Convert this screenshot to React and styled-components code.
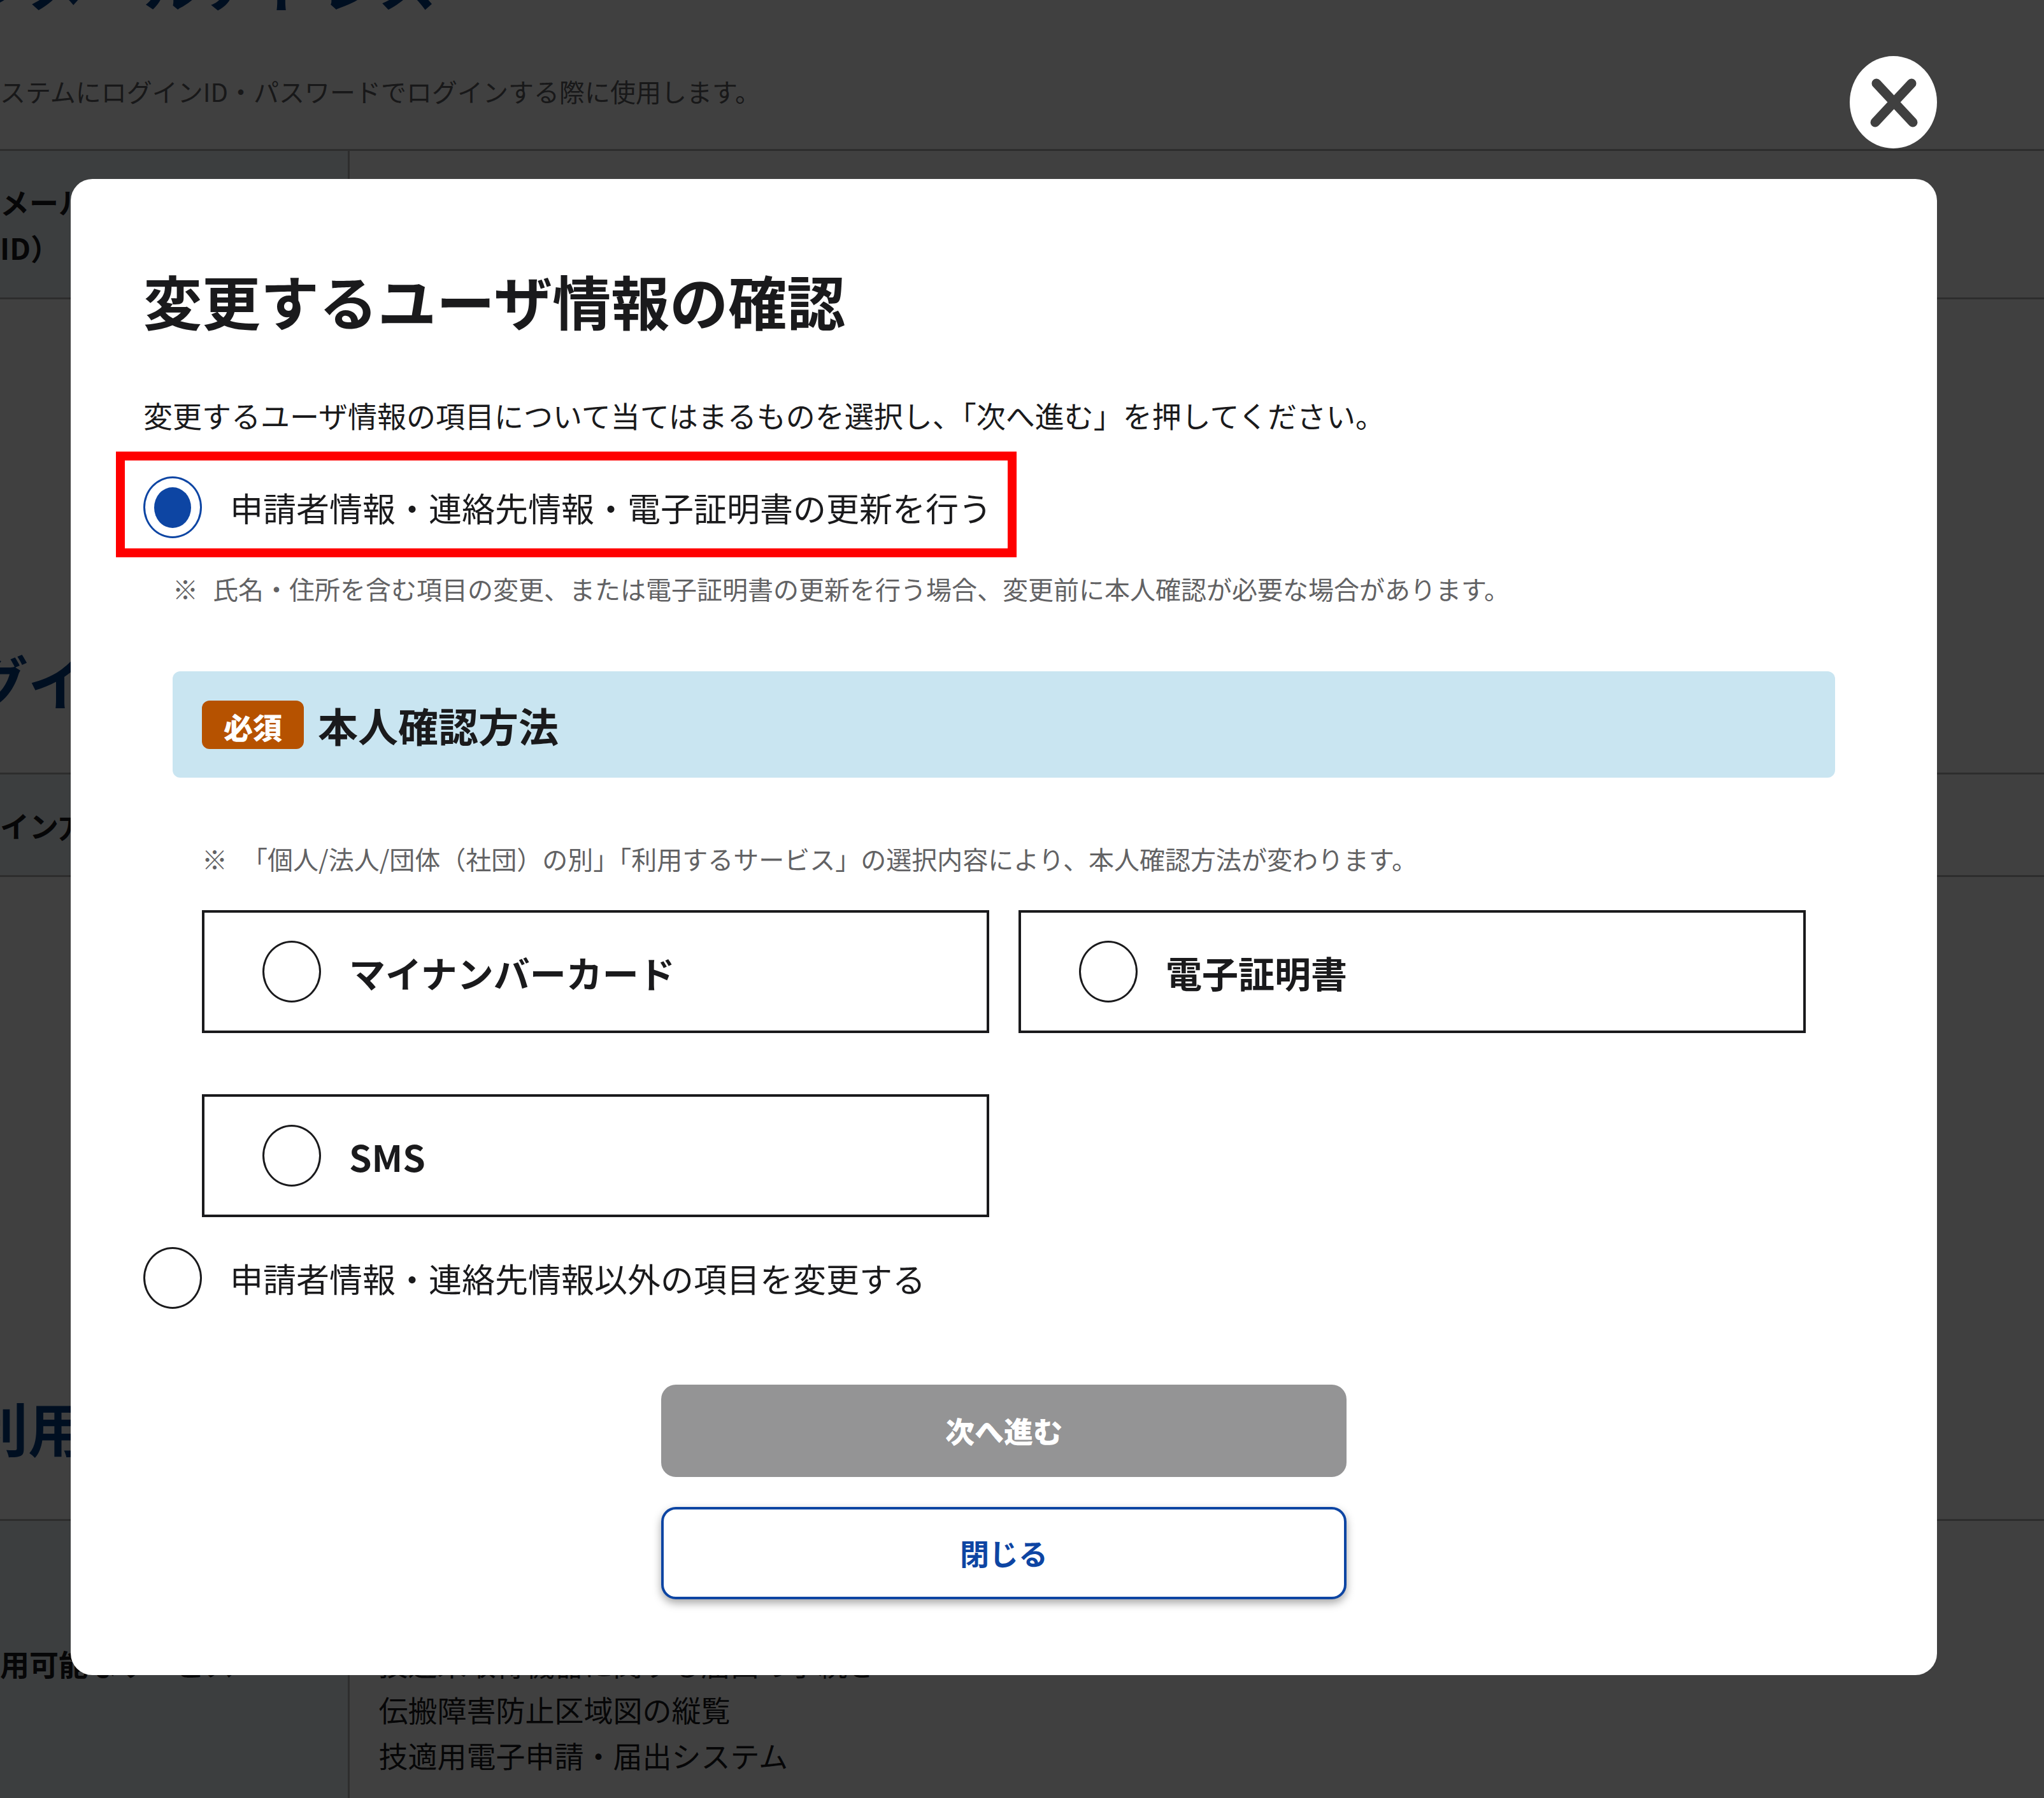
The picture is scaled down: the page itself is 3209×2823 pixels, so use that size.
import { useState } from "react";
import styled, { createGlobalStyle } from "styled-components";

const GlobalStyle = createGlobalStyle`
  * {
    box-sizing: border-box;
  }
  body {
    margin: 0;
    background: #ffffff;
    color: #1a1a1c;
    font-family: "Noto Sans CJK JP", "Noto Sans", sans-serif;
    font-size: 46px;
    line-height: 72px;
  }
  h1, h2, h3, p {
    margin: 0;
  }
`;

const methods = ["マイナンバーカード", "電子証明書", "SMS"];

const App = () => {
  const [target, setTarget] = useState("applicant");
  const [method, setMethod] = useState("");

  return (
    <Screen>
      <GlobalStyle />
      <Page>
        <PageSection $space={529}>
          <PageTitle>ンメールアドレス</PageTitle>
          <PageNote>
            ステムにログインID・パスワードでログインする際に使用します。
          </PageNote>
          <InfoTable>
            <tbody>
              <tr>
                <HeadCell scope="row">
                  メール
                  <br />
                  ID）
                </HeadCell>
                <DataCell />
              </tr>
            </tbody>
          </InfoTable>
        </PageSection>
        <PageSection $space={794}>
          <PageTitle>グイン</PageTitle>
          <InfoTable>
            <tbody>
              <tr>
                <HeadCell scope="row">イン方法</HeadCell>
                <DataCell />
              </tr>
            </tbody>
          </InfoTable>
        </PageSection>
        <PageSection>
          <PageTitle>利用</PageTitle>
          <InfoTable>
            <tbody>
              <tr>
                <HeadCell scope="row">用可能なサービス</HeadCell>
                <DataCell>
                  <br />
                  <br />
                  技適未取得機器に関する届出の手続き
                  <br />
                  伝搬障害防止区域図の縦覧
                  <br />
                  技適用電子申請・届出システム
                </DataCell>
              </tr>
            </tbody>
          </InfoTable>
        </PageSection>
      </Page>

      <Overlay>
        <CloseIconButton type="button" aria-label="閉じる">
          <svg viewBox="0 0 137 145" width="137" height="145">
            <ellipse cx="68.5" cy="72.5" rx="68.5" ry="72.5" fill="#fff" />
            <path
              d="M42 43L99 104M97 43L40 104"
              stroke="#404040"
              strokeWidth="15"
              strokeLinecap="round"
            />
          </svg>
        </CloseIconButton>
        <Dialog role="dialog" aria-labelledby="dialog-title">
          <DialogTitle id="dialog-title">変更するユーザ情報の確認</DialogTitle>
          <Lead>
            変更するユーザ情報の項目について当てはまるものを選択し、「次へ進む」を押してください。
          </Lead>
          <TargetOption $marked>
            <Radio
              name="target"
              checked={target === "applicant"}
              onChange={() => setTarget("applicant")}
            />
            申請者情報・連絡先情報・電子証明書の更新を行う
          </TargetOption>
          <Details>
            <Note>
              <span>※</span>
              氏名・住所を含む項目の変更、または電子証明書の更新を行う場合、変更前に本人確認が必要な場合があります。
            </Note>
            <SectionBar>
              <Badge>必須</Badge>
              本人確認方法
            </SectionBar>
            <MethodArea>
              <Note>
                <span>※</span>
                「個人/法人/団体（社団）の別」「利用するサービス」の選択内容により、本人確認方法が変わります。
              </Note>
              <MethodGrid>
                {methods.map((name) => (
                  <MethodOption key={name}>
                    <Radio
                      name="method"
                      checked={method === name}
                      onChange={() => setMethod(name)}
                    />
                    {name}
                  </MethodOption>
                ))}
              </MethodGrid>
            </MethodArea>
          </Details>
          <TargetOption>
            <Radio
              name="target"
              checked={target === "other"}
              onChange={() => setTarget("other")}
            />
            申請者情報・連絡先情報以外の項目を変更する
          </TargetOption>
          <Actions>
            <ActionButton type="button" disabled>
              次へ進む
            </ActionButton>
            <ActionButton type="button">閉じる</ActionButton>
          </Actions>
        </Dialog>
      </Overlay>
    </Screen>
  );
};

export default App;

const Screen = styled.div`
  position: relative;
  height: 100vh;
  overflow: hidden;
`;

/* the page behind the dialog is scrolled down and to the right */
const Page = styled.main`
  display: flex;
  flex-direction: column;
  margin-top: -98px;
`;

const PageSection = styled.section`
  margin-bottom: ${(props) => props.$space || 0}px;
`;

const PageTitle = styled.h2`
  margin: 0 0 76px -48px;
  font-size: 92px;
  line-height: 138px;
  color: #003c82;
`;

const PageNote = styled.p`
  margin-bottom: 64px;
  font-size: 40px;
  line-height: 54px;
  color: #626264;
`;

const InfoTable = styled.table`
  width: 100%;
  border-collapse: collapse;
  border-top: 3px solid #b4b4b4;
  border-bottom: 3px solid #b4b4b4;
`;

const HeadCell = styled.th`
  width: 547px;
  padding: 43px 0;
  background: #f0f5fa;
  border-right: 3px solid #b4b4b4;
  text-align: left;
  white-space: nowrap;
`;

const DataCell = styled.td`
  padding: 43px 46px;
`;

const Overlay = styled.div`
  position: absolute;
  inset: 0;
  display: flex;
  flex-direction: column;
  padding: 88px 168px 0 111px;
  background: rgba(0, 0, 0, 0.75);
`;

const CloseIconButton = styled.button`
  align-self: flex-end;
  height: 145px;
  margin-bottom: 48px;
  padding: 0;
  border: none;
  background: none;
  cursor: pointer;
  svg {
    display: block;
  }
`;

const Dialog = styled.div`
  padding: 121px 114px 119px;
  border-radius: 34px;
  background: #ffffff;
`;

const DialogTitle = styled.h1`
  margin-bottom: 75px;
  font-size: 92px;
  line-height: 138px;
`;

const Lead = styled.p`
  padding-bottom: 14px;
`;

const TargetOption = styled.label`
  position: relative;
  display: flex;
  align-items: center;
  gap: 44px;
  width: fit-content;
  margin-top: 47px;
  font-size: 52px;
  line-height: 78px;
  &::after {
    content: "";
    display: ${(props) => (props.$marked ? "block" : "none")};
    position: absolute;
    inset: -39px -39px -30px -43px;
    border: 14px solid #ff0000;
  }
`;

const Radio = styled.input.attrs({ type: "radio" })`
  appearance: none;
  flex: none;
  display: grid;
  place-items: center;
  width: 92px;
  height: 97px;
  margin: 0;
  border: 3px solid ${(props) => (props.checked ? "#0d45a3" : "#1a1a1c")};
  border-radius: 50%;
  background: #ffffff;
  &:checked::before {
    content: "";
    width: 58px;
    height: 64px;
    border-radius: 50%;
    background: #0d45a3;
  }
`;

const Details = styled.div`
  margin: 49px 46px 0;
`;

const Note = styled.p`
  display: flex;
  gap: 23px;
  font-size: 40px;
  line-height: 60px;
  color: #626264;
`;

const SectionBar = styled.h3`
  display: flex;
  align-items: center;
  gap: 22px;
  margin: 100px 0 97px;
  padding: 36px 46px;
  border-radius: 12px;
  background: #c9e5f1;
  font-size: 63px;
  line-height: 95px;
`;

const Badge = styled.span`
  padding: 4px 34px 0;
  border-radius: 12px;
  background: #b65200;
  color: #ffffff;
  font-size: 46px;
  font-weight: 900;
  line-height: 72px;
`;

const MethodArea = styled.div`
  margin: 0 46px;
`;

const MethodGrid = styled.div`
  display: grid;
  grid-template-columns: 1fr 1fr;
  gap: 96px 46px;
  margin-top: 51px;
`;

const MethodOption = styled.label`
  display: flex;
  align-items: center;
  gap: 44px;
  padding: 44px 91px;
  border: 4px solid #1a1a1c;
  font-size: 57px;
  line-height: 86px;
  font-weight: 700;
`;

const Actions = styled.div`
  display: flex;
  flex-direction: column;
  align-items: center;
  gap: 47px;
  margin-top: 119px;
`;

const ActionButton = styled.button`
  width: 1076px;
  max-width: 100%;
  height: 145px;
  padding: 0 0 4px;
  border: 4px solid #0d45a3;
  border-radius: 23px;
  background: #ffffff;
  color: #0d45a3;
  font-family: inherit;
  font-size: 46px;
  font-weight: 700;
  box-shadow: 0 6px 14px rgba(0, 0, 0, 0.35);
  &:disabled {
    border-color: #949495;
    background: #949495;
    color: #ffffff;
    font-weight: 900;
    box-shadow: none;
  }
`;
